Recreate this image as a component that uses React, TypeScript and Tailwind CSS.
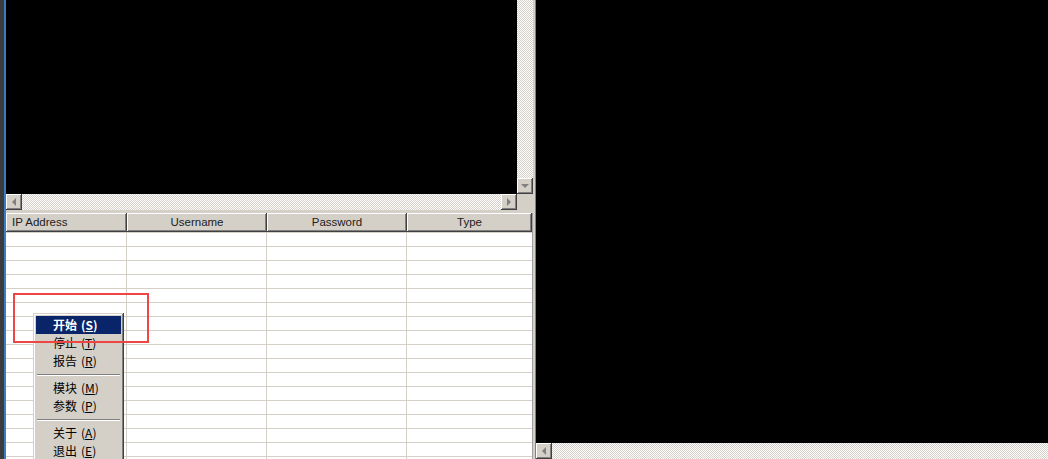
import React from "react";

const bevel =
  "shadow-[inset_-1px_-1px_#404040,inset_1px_1px_#ffffff,inset_-2px_-2px_#808080,inset_2px_2px_#d4d0c8]";
const checker =
  "bg-[repeating-conic-gradient(#d4d0c8_0_25%,#ffffff_0_50%)] bg-[length:2px_2px]";

function Arrow({ dir }: { dir: "left" | "right" | "down" }) {
  const pts =
    dir === "left" ? "6,4 6,12 2,8" : dir === "right" ? "2,4 2,12 6,8" : "4,2 12,2 8,6";
  const w = dir === "down" ? 16 : 8;
  const h = dir === "down" ? 8 : 16;
  return (
    <svg width={w} height={h} viewBox={`0 0 ${w} ${h}`}>
      <polygon points={pts} fill="#808080" />
    </svg>
  );
}

function ScrollBtn({ dir }: { dir: "left" | "right" | "down" }) {
  return (
    <div
      className={`flex h-[16px] w-[16px] shrink-0 items-center justify-center bg-[#d4d0c8] ${bevel}`}
    >
      <Arrow dir={dir} />
    </div>
  );
}

const columns = [
  { name: "IP Address", w: "w-[121px]", align: "justify-start pl-[6px]" },
  { name: "Username", w: "w-[140px]", align: "justify-center" },
  { name: "Password", w: "w-[140px]", align: "justify-center" },
  { name: "Type", w: "w-[125px]", align: "justify-center" },
];

const rows = Array.from({ length: 17 });

type Item = { label: string; key: string; active?: boolean } | "sep";

const menu: Item[] = [
  { label: "开始", key: "S", active: true },
  { label: "停止", key: "T" },
  { label: "报告", key: "R" },
  "sep",
  { label: "模块", key: "M" },
  { label: "参数", key: "P" },
  "sep",
  { label: "关于", key: "A" },
  { label: "退出", key: "E" },
];

export default function App() {
  return (
    <div className="relative flex h-[459px] w-[1048px] overflow-hidden bg-black font-['Liberation_Sans','Noto_Sans_CJK_SC',sans-serif]">
      <div className="w-[4px] shrink-0 bg-[#3c3c3c]" />
      <div className="w-[2px] shrink-0 bg-[#3a7dc4]" />

      {/* left column */}
      <div className="flex w-[527px] shrink-0 flex-col overflow-hidden">
        <div className="flex h-[194px] shrink-0">
          <div className="flex-1 bg-black" />
          <div className="flex w-[16px] flex-col">
            <div className={`flex-1 ${checker}`} />
            <ScrollBtn dir="down" />
          </div>
        </div>
        <div className="flex h-[17px] shrink-0 bg-[#d4d0c8]">
          <ScrollBtn dir="left" />
          <div className={`h-[16px] flex-1 ${checker}`} />
          <ScrollBtn dir="right" />
          <div className="w-[16px] bg-[#d4d0c8]" />
        </div>
        <div className="h-[2px] shrink-0 bg-[#d4d0c8]" />

        <div className="flex min-h-0 flex-1 flex-col overflow-hidden border-r border-[#a0a0a0] bg-white">
          <div className="flex h-[19px] shrink-0">
            {columns.map((c) => (
              <div
                key={c.name}
                className={`flex ${c.w} ${c.align} items-center bg-[#d4d0c8] text-[11.5px] text-[#202020] ${bevel}`}
              >
                {c.name}
              </div>
            ))}
          </div>
          {rows.map((_, i) => (
            <div key={i} className="flex h-[14px] shrink-0 border-t border-[#d4d0c8]">
              {columns.map((c) => (
                <div key={c.name} className={`${c.w} border-r border-[#d4d0c8] last:border-r-0`} />
              ))}
            </div>
          ))}
        </div>
      </div>

      {/* splitter */}
      <div className="w-[3px] shrink-0 border-r border-[#808080] bg-[#d4d0c8]" />

      {/* right column */}
      <div className="flex flex-1 flex-col">
        <div className="flex-1 bg-black" />
        <div className="flex h-[16px] shrink-0">
          <ScrollBtn dir="left" />
          <div className={`flex-1 ${checker}`} />
        </div>
      </div>

      {/* context menu */}
      <div className="absolute left-[33px] top-[313px] w-[91px] bg-[#d4d0c8] p-[3px] shadow-[inset_-1px_-1px_#404040,inset_1px_1px_#d4d0c8,inset_-2px_-2px_#808080,inset_2px_2px_#ffffff] font-['Noto_Sans_CJK_SC',sans-serif]">
        {menu.map((m, i) =>
          m === "sep" ? (
            <div key={i} className="flex h-[9px] flex-col justify-center px-[1px]">
              <div className="h-[1px] bg-[#808080]" />
              <div className="h-[1px] bg-white" />
            </div>
          ) : (
            <div
              key={i}
              className={`flex h-[18px] items-center pl-[17px] text-[12px] leading-none ${
                m.active ? "bg-[#0a246a] font-bold text-white" : "text-black"
              }`}
            >
              {m.label}
              <span className="ml-[4px]">
                (<span className="underline">{m.key}</span>)
              </span>
            </div>
          )
        )}
      </div>

      {/* annotation */}
      <div className="absolute left-[13px] top-[293px] h-[50px] w-[136px] border-2 border-[#f04545]" />
    </div>
  );
}
